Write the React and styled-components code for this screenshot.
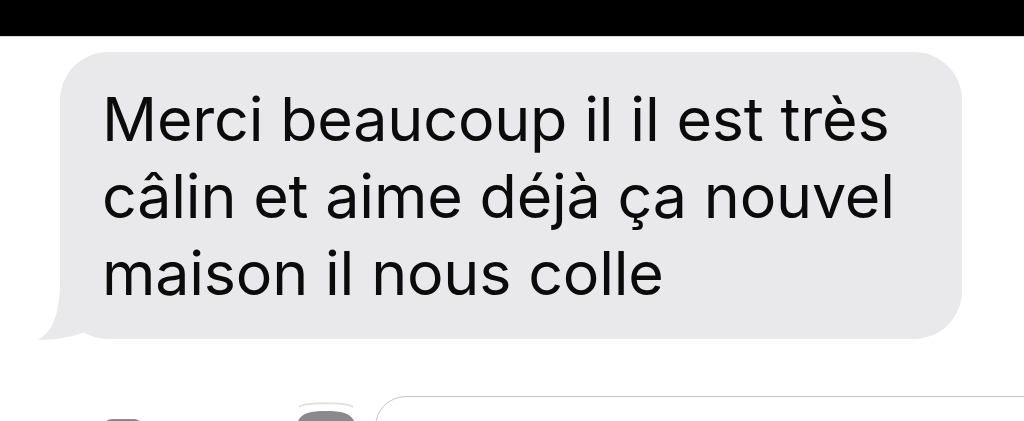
import React from 'react'
import styled, { createGlobalStyle } from 'styled-components'

const GlobalStyle = createGlobalStyle`
  html, body {
    margin: 0;
    padding: 0;
    background: #ffffff;
  }
`

const Screen = styled.div`
  width: 1024px;
  height: 421px;
  overflow: hidden;
  display: flex;
  flex-direction: column;
  background: #ffffff;
  font-family: Inter, "Liberation Sans", sans-serif;
`

const StatusBar = styled.div`
  height: 36px;
  flex-shrink: 0;
  background: #000000;
  border-bottom: 1px solid #d8d8d8;
`

const Thread = styled.div`
  padding: 15px 0 0 60px;
`

const Bubble = styled.div`
  position: relative;
  width: 902px;
  box-sizing: border-box;
  padding: 29px 0 27px 42px;
  background: #e9e9eb;
  border-radius: 48px;
  color: #0b0b0b;
  font-size: 61px;
  line-height: 77px;
  letter-spacing: -0.2px;
  white-space: nowrap;
`

const Tail = styled.svg`
  position: absolute;
  left: -24px;
  bottom: -1px;
  width: 52px;
  height: 64px;
`

const Composer = styled.div`
  display: flex;
  align-items: flex-start;
  margin-top: 57px;
  padding-left: 100px;
`

const CameraIcon = styled.svg`
  width: 46px;
  height: 30px;
  margin-top: 19px;
`

const AppsIcon = styled.svg`
  width: 70px;
  height: 30px;
  margin-left: 145px;
  margin-top: 5px;
`

const Field = styled.div`
  flex: 1;
  height: 60px;
  margin-left: 14px;
  margin-right: -40px;
  border: 1.5px solid #c4c4c6;
  border-radius: 34px;
`

const lines = [
  'Merci beaucoup il il est très',
  'câlin et aime déjà ça nouvel',
  'maison il nous colle',
]

const App = () => {
  return (
    <Screen>
      <GlobalStyle />
      <StatusBar />
      <Thread>
        <Bubble>
          {lines.map((line) => (
            <div key={line}>{line}</div>
          ))}
          <Tail viewBox="0 0 52 64">
            <path d="M24 4 C24 38 17 55 2 64 C20 64 36 61 52 55 L52 4 Z" fill="#e9e9eb" />
          </Tail>
        </Bubble>
      </Thread>
      <Composer>
        <CameraIcon viewBox="0 0 46 30">
          <path d="M4 12 C4 6 8 4 14 4 L32 4 C38 4 42 6 42 12 L42 30 L4 30 Z" fill="#8a8a8e" />
        </CameraIcon>
        <AppsIcon viewBox="0 0 70 30">
          <path d="M8 6 C14 1 56 1 62 6" stroke="#e2e2e4" strokeWidth="2" fill="none" />
          <path d="M6 22 C10 12 18 10 35 10 C52 10 60 12 64 22 L64 30 L6 30 Z" fill="#8a8a8e" />
        </AppsIcon>
        <Field />
      </Composer>
    </Screen>
  )
}

export default App
